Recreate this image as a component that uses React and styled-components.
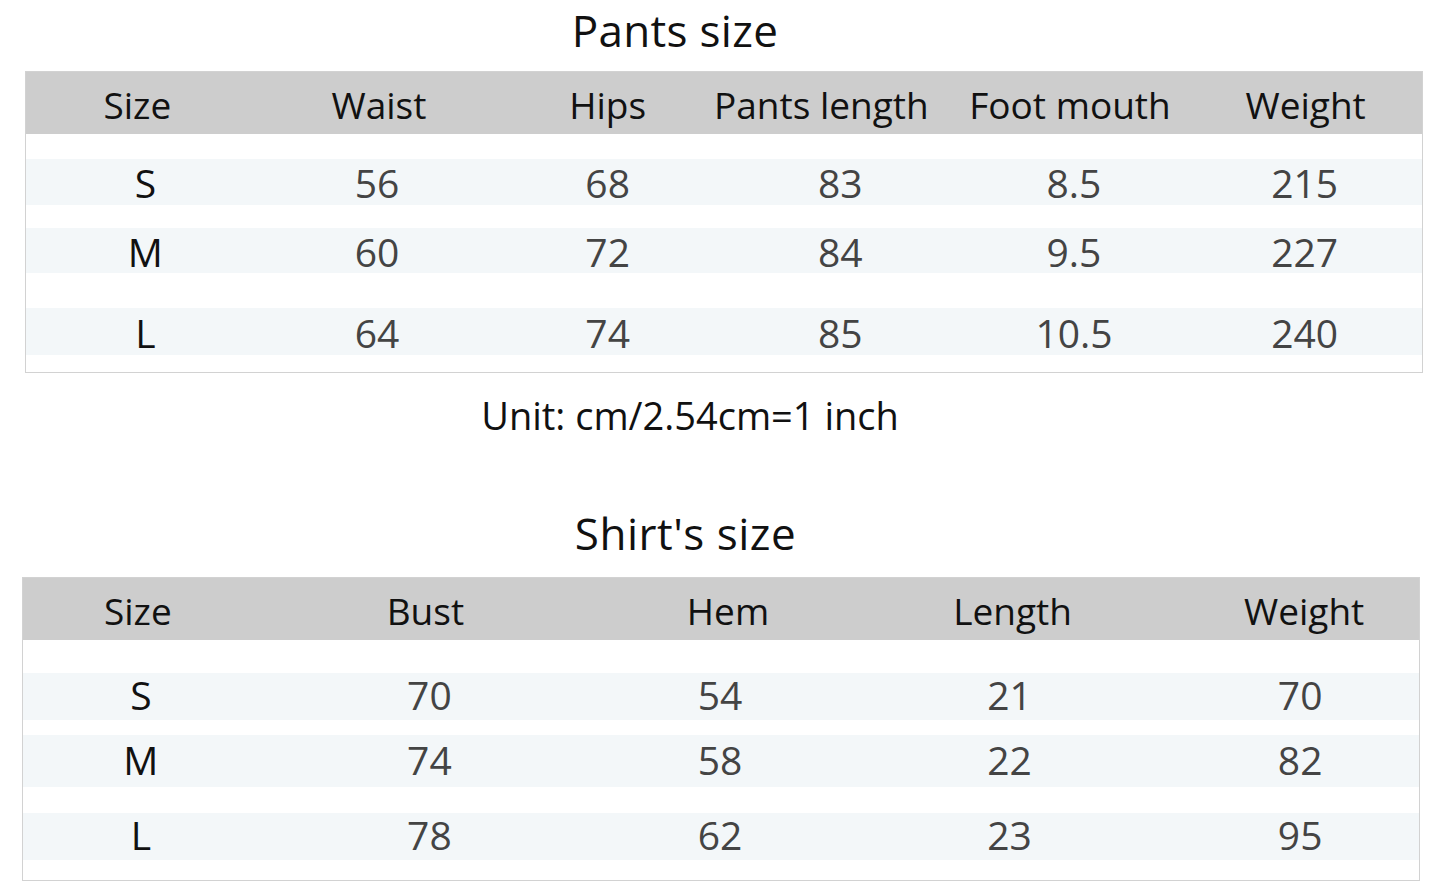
import React from "react";
import styled, { createGlobalStyle } from "styled-components";

const Global = createGlobalStyle`
  html, body { margin: 0; padding: 0; background: #ffffff; }
  body { font-family: "Open Sans", "Noto Sans", sans-serif; color: #111; }
`;

const Page = styled.div`
  width: 1445px;
  display: flex;
  flex-direction: column;
`;

const Title = styled.h2`
  margin: ${(p) => p.$top}px 0 0;
  font-size: 44px;
  line-height: 52px;
  font-weight: 400;
  text-align: center;
  padding-right: ${(p) => p.$shift}px;
  color: #111;
  letter-spacing: ${(p) => p.$ls || 0}px;
`;

const Note = styled.p`
  margin: 20px 0 0;
  font-size: 38px;
  line-height: 44px;
  text-align: center;
  padding-right: ${(p) => p.$shift}px;
  color: #111;
`;

const Table = styled.div`
  box-sizing: border-box;
  width: 1398px;
  margin: ${(p) => p.$top}px 0 0 ${(p) => p.$left}px;
  border: 1px solid #d2d2d2;
  background: #ffffff;
  display: flex;
  flex-direction: column;
  padding-bottom: ${(p) => p.$bottom}px;
`;

const HeadRow = styled.div`
  display: grid;
  grid-template-columns: ${(p) => p.$cols};
  height: 62px;
  align-items: center;
  background: #cdcdcd;
  margin-bottom: ${(p) => p.$after}px;
`;

const HeadCell = styled.div`
  text-align: center;
  font-size: 37px;
  line-height: 44px;
  color: #111;
  padding-top: 4px;
  transform: translateX(${(p) => p.$dx || 0}px);
`;

const Row = styled.div`
  display: grid;
  grid-template-columns: ${(p) => p.$cols};
  height: ${(p) => p.$h}px;
  margin-top: ${(p) => p.$top}px;
  align-items: center;
  background: #f3f7f9;
`;

const Cell = styled.div`
  text-align: center;
  font-size: 39px;
  line-height: 44px;
  color: ${(p) => (p.$key ? "#111" : "#444")};
  transform: translateX(${(p) => p.$dx || 0}px);
  margin-top: ${(p) => p.$dy || 0}px;
`;

const pants = {
  cols: "repeat(6, 1fr)",
  head: ["Size", "Waist", "Hips", "Pants length", "Foot mouth", "Weight"],
  headDx: [-5, 4, 0, -19, -3, 0],
  dataDx: [3, 2, 0, 0, 1, -1],
  dy: 2,
  rows: [
    { h: 46, top: 0, cells: ["S", "56", "68", "83", "8.5", "215"] },
    { h: 45, top: 23, cells: ["M", "60", "72", "84", "9.5", "227"] },
    { h: 47, top: 35, cells: ["L", "64", "74", "85", "10.5", "240"] },
  ],
};

const shirt = {
  cols: "236fr 340fr 248fr 332fr 242fr",
  head: ["Size", "Bust", "Hem", "Length", "Weight"],
  headDx: [-3, -3, 6, 1, 6],
  dataDx: [0, 1, -2, -2, 2],
  dy: -3,
  rows: [
    { h: 47, top: 0, cells: ["S", "70", "54", "21", "70"] },
    { h: 52, top: 15, cells: ["M", "74", "58", "22", "82"] },
    { h: 47, top: 26, cells: ["L", "78", "62", "23", "95"] },
  ],
};

function SizeTable({ data, top, left, after, bottom }) {
  return (
    <Table $top={top} $left={left} $bottom={bottom}>
      <HeadRow $cols={data.cols} $after={after}>
        {data.head.map((h, i) => (
          <HeadCell key={h + i} $dx={data.headDx[i]}>
            {h}
          </HeadCell>
        ))}
      </HeadRow>
      {data.rows.map((r) => (
        <Row key={r.cells[0]} $cols={data.cols} $h={r.h} $top={r.top}>
          {r.cells.map((c, i) => (
            <Cell key={i} $key={i === 0} $dx={data.dataDx[i]} $dy={data.dy}>
              {c}
            </Cell>
          ))}
        </Row>
      ))}
    </Table>
  );
}

export default function App() {
  return (
    <>
      <Global />
      <Page>
        <Title $top={4} $shift={95} $ls={0.3}>Pants size</Title>
        <SizeTable data={pants} top={15} left={25} after={25} bottom={17} />
        <Note $shift={65}>Unit: cm/2.54cm=1 inch</Note>
        <Title $top={70} $shift={74} $ls={0.5}>Shirt's size</Title>
        <SizeTable data={shirt} top={18} left={22} after={33} bottom={20} />
      </Page>
    </>
  );
}
